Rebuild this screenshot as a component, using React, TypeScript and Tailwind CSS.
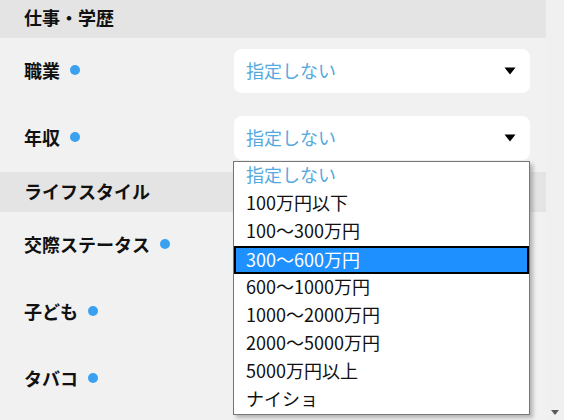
import React from "react";

const FONT = { fontFamily: '"Noto Sans CJK JP", "Noto Sans", sans-serif' };

function Dot() {
  return <span className="ml-[10px] inline-block h-[10px] w-[10px] rounded-full bg-[#3aa0f0]" />;
}

function SectionHeader({ title }: { title: string }) {
  return (
    <div className="flex h-[40px] items-center bg-[#e4e4e4] pl-6 pb-[3px] text-[18px] font-bold leading-none text-[#111]">
      {title}
    </div>
  );
}

function Caret() {
  return (
    <svg width="12" height="8" viewBox="0 0 12 8" className="shrink-0">
      <polygon points="0.5,0.5 11.5,0.5 6,7.5" fill="#000" />
    </svg>
  );
}

function Select({ children }: { children?: React.ReactNode }) {
  return (
    <div className="relative flex-1">
      <div className="flex h-[44px] items-center justify-between rounded-lg bg-white pl-3 pr-[14px]">
        <span className="pb-[3px] text-[18px] leading-none text-[#55a8e0]">指定しない</span>
        <Caret />
      </div>
      {children}
    </div>
  );
}

function Row({ label, select, children }: { label: string; select?: boolean; children?: React.ReactNode }) {
  return (
    <div className="flex h-[67px] items-center pl-6 pr-4 pb-[1px]">
      <div className="flex w-[210px] shrink-0 items-center pb-[3px] text-[18px] font-bold leading-none text-[#111]">
        {label}
        <Dot />
      </div>
      {select ? <Select>{children}</Select> : <div className="flex-1" />}
    </div>
  );
}

const options = [
  "指定しない",
  "100万円以下",
  "100〜300万円",
  "300〜600万円",
  "600〜1000万円",
  "1000〜2000万円",
  "2000〜5000万円",
  "5000万円以上",
  "ナイショ",
];

function Dropdown() {
  return (
    <div className="absolute left-[-1px] top-[45px] z-10 w-[297px] border border-[#767676] bg-white shadow-[3px_3px_4px_rgba(0,0,0,0.25)]">
      {options.map((o, i) => {
        const sel = i === 3;
        const first = i === 0;
        return (
          <div
            key={o}
            className={
              sel
                ? "flex h-[28px] items-center border-2 border-black bg-[#1e90ff] pl-[10px] pb-[3px] text-[18px] leading-none text-white"
                : first
                ? "flex h-[28px] items-center pl-3 pb-[5px] text-[18px] leading-none text-[#55a8e0]"
                : "flex h-[28px] items-center pl-3 pb-[4px] text-[18px] leading-none text-[#111]"
            }
          >
            {o}
          </div>
        );
      })}
    </div>
  );
}

export default function App() {
  return (
    <div className="flex h-[420px] w-[564px] overflow-hidden bg-[#f1f1f1]" style={FONT}>
      <div className="flex w-[546px] flex-col">
        <div className="flex h-[38px] items-center bg-[#e4e4e4] pl-6 pb-[4px] text-[18px] font-bold leading-none text-[#111]">
          仕事・学歴
        </div>
        <Row label="職業" select />
        <Row label="年収" select>
          <Dropdown />
        </Row>
        <SectionHeader title="ライフスタイル" />
        <Row label="交際ステータス" />
        <Row label="子ども" />
        <Row label="タバコ" />
      </div>
      <div className="relative flex w-[18px] flex-col justify-end bg-[#f0f0f0]">
        <div className="flex h-[16px] items-center justify-center">
          <svg width="8" height="5" viewBox="0 0 8 5">
            <polygon points="0,0 8,0 4,5" fill="#5a5a5a" />
          </svg>
        </div>
      </div>
    </div>
  );
}
